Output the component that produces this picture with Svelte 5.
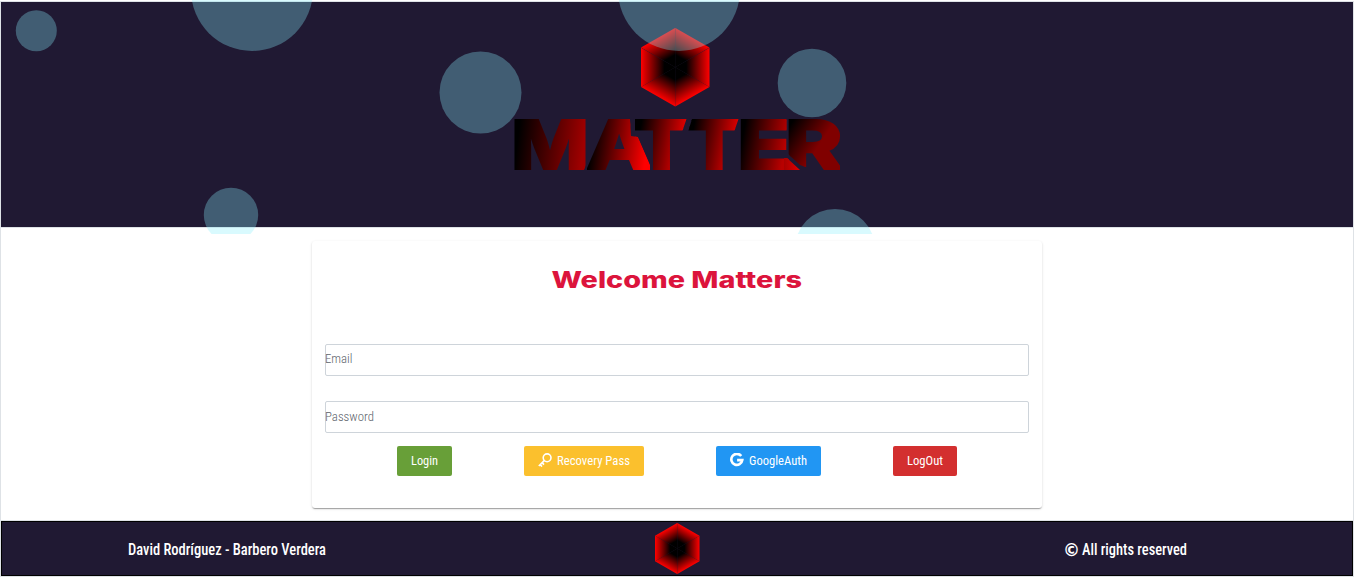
<script>
  const bubbles = [
    [36.3, 30.7, 20.5], [252, -10, 61], [480.5, 92.5, 41], [679, -10, 61],
    [812, 83, 34.3], [231, 215, 27.2], [835, 249.3, 40.3]
  ];
  const sides = [0, 1, 2, 3, 4, 5];
  // letter, left edge, width, gradient end colour, visible outline
  const letters = [
    { c: 'M', x: 0, w: 72, end: '#a00000', cut: '0,0 72,0 72,46 70,51 0,51' },
    { c: 'A', x: 75, w: 61, end: '#ff0000', cut: '73,0 116,0 117,17 124,18 136,46 136,51 73,51' },
    { c: 'T', x: 122, w: 51, end: '#e60000', cut: '121,0 172.5,0 168,13 168,51 121,51' },
    { c: 'T', x: 175, w: 50.5, end: '#e60000', cut: '178,0 224.5,0 220,13 220,51 174,51 174,13' },
    { c: 'E', x: 226, w: 49, end: '#b80000', cut: '226,0 272.5,0 272.5,38 286,51 226,51' },
    { c: 'R', x: 274, w: 51.5, end: '#800000', cut: '274,0 326,0 326,51 300,51 286,46 274,35' }
  ];
</script>

{#snippet label(text, width, size, weight, color)}
  <svg class="label" width={width} height="20" style:overflow="visible">
    <text x="0" y="15" textLength={width} lengthAdjust="spacingAndGlyphs" font-size={size} font-weight={weight} fill={color}>{text}</text>
  </svg>
{/snippet}

{#snippet gem(id, w, h)}
  <svg class="gem" width={w} height={h} viewBox="-34.2 -39.4 68.4 78.8" preserveAspectRatio="none">
    <defs>
      <linearGradient id={id} gradientUnits="userSpaceOnUse" x1="0" y1="0" x2="34.2" y2="0">
        <stop offset=".32" stop-color="#000" />
        <stop offset="1" stop-color="#f00" />
      </linearGradient>
    </defs>
    {#each sides as s}
      <path d="M0 0L34.2-19.7V19.7Z" fill="url(#{id})" transform="rotate({s * 60})" />
    {/each}
  </svg>
{/snippet}

<div class="page">
  <header>
    {@render gem('gemTop', 68.5, 78.5)}
    <svg class="word" width="327" height="52" viewBox="0 0 327 52">
      <defs>
        {#each letters as l, i}
          <linearGradient id="g{i}" gradientUnits="userSpaceOnUse" x1={l.x + 6} y1="0" x2={l.x + l.w} y2={l.c === 'R' ? 30 : 8}>
            <stop offset="0" stop-color="#000" />
            <stop offset={l.c === 'R' ? 0.65 : 1} stop-color={l.end} />
          </linearGradient>
          <clipPath id="c{i}"><polygon points={l.cut} /></clipPath>
        {/each}
        <linearGradient id="shard">
          <stop offset="0" stop-color="#a80000" />
          <stop offset="1" stop-color="#e00000" />
        </linearGradient>
      </defs>
      {#each letters as l, i}
        <g clip-path="url(#c{i})">
          <text x={l.x - 3} y="50.2" font-size="68" textLength={l.w + 6} lengthAdjust="spacingAndGlyphs" fill="url(#g{i})" stroke="url(#g{i})" stroke-width="2">{l.c}</text>
        </g>
      {/each}
      <polygon points="270,39 273,39 286,51 270,51" fill="url(#shard)" />
    </svg>
  </header>

  <main>
    <section class="card">
      <h1>
        <svg width="250" height="30">
          <text x="-0.5" y="23" font-size="22.5" textLength="250.5" lengthAdjust="spacingAndGlyphs">Welcome Matters</text>
        </svg>
      </h1>
      <div class="field">{@render label('Email', 27.5, 13, 300, '#5c636b')}</div>
      <div class="field low">{@render label('Password', 49, 13, 300, '#5c636b')}</div>
      <div class="actions">
        <button class="green">{@render label('Login', 27, 13, 400, '#fff')}</button>
        <button class="yellow">
          <svg class="icon" width="14" height="14" viewBox="0 0 14 14" fill="none" stroke="#fff">
            <circle cx="9.1" cy="4.8" r="3.9" stroke-width="1.6" />
            <path d="M6.2 7.6L.8 13M2 11.5l2 2M4 9.6l2 2" stroke-width="1.7" />
          </svg>
          {@render label('Recovery Pass', 73, 13, 400, '#fff')}
        </button>
        <button class="blue">
          <svg class="icon" width="14" height="14" viewBox="0 0 14 14" fill="none" stroke="#fff" stroke-width="2.6">
            <path d="M11.2 3A5.5 5.5 0 1 0 12.3 7.1H7.1" />
          </svg>
          {@render label('GoogleAuth', 58, 13, 400, '#fff')}
        </button>
        <button class="red">{@render label('LogOut', 36, 13, 400, '#fff')}</button>
      </div>
    </section>
  </main>

  <footer>
    <div class="author">{@render label('David Rodríguez - Barbero Verdera', 198, 16, 500, '#fff')}</div>
    {@render gem('gemBottom', 44.5, 51)}
    <div class="rights">
      <span class="copy">©</span>
      {@render label('All rights reserved', 105, 16, 500, '#fff')}
    </div>
  </footer>

  <svg class="bubbles" width="1354" height="234">
    {#each bubbles as [cx, cy, r]}
      <circle {cx} {cy} {r} />
    {/each}
  </svg>
</div>

<style>
  :global(body) { background: #fff; overflow: hidden; }
  .page {
    position: relative;
    box-sizing: border-box;
    width: 1354px;
    height: 578px;
    padding-top: 1px;
    font-family: Roboto, sans-serif;
  }
  svg { display: block; flex: none; }
  .label text { font-family: Roboto, sans-serif; font-stretch: 75%; }
  header {
    box-sizing: border-box;
    height: 227px;
    border: 1px solid #dee2e6;
    background: #201933;
    display: flex;
    flex-direction: column;
    align-items: center;
    padding-top: 26px;
  }
  header .gem { margin-right: 3px; }
  .word { margin: 12px 0 0; overflow: visible; }
  .word text { font-family: Inter, sans-serif; font-weight: 800; }
  main {
    box-sizing: border-box;
    height: 292px;
    border: solid #dee2e6;
    border-width: 0 1px;
    padding-top: 13px;
  }
  .card {
    box-sizing: border-box;
    width: 730px;
    height: 267px;
    margin: 0 auto;
    padding: 24px 13px 0;
    border-radius: 3px;
    background: #fff;
    box-shadow: 0 2px 1px -1px rgba(0,0,0,.2), 0 1px 1px 0 rgba(0,0,0,.14), 0 1px 3px 0 rgba(0,0,0,.12);
  }
  h1 { display: flex; justify-content: center; margin: 0 0 49px; }
  h1 svg { overflow: visible; }
  h1 text { font-family: Inter, sans-serif; font-weight: 800; fill: #dc143c; }
  .field {
    box-sizing: border-box;
    height: 32px;
    margin-bottom: 25px;
    border: 1px solid #ced4da;
    border-radius: 2px;
    padding-top: 3px;
  }
  .field .label { margin-left: -1px; }
  .low { padding-top: 4px; }
  .actions { display: flex; justify-content: space-evenly; margin-top: -12px; }
  button {
    display: flex;
    box-sizing: border-box;
    height: 30px;
    padding: 4px 14px 0;
    border: 0;
    border-radius: 2px;
  }
  .icon { margin: 3px 5px 0 0; }
  .green { background: #689f38; }
  .yellow { background: #fbc02d; }
  .blue { background: #2196f3; }
  .red { background: #d32f2f; }
  footer {
    box-sizing: border-box;
    height: 55px;
    margin: 1px 0 0 1px;
    width: 1352px;
    border: 1px solid #000;
    outline: 1px solid #dee2e6;
    background: #201933;
    display: grid;
    grid-template-columns: 527px 297px 1fr;
    padding-left: 126px;
    align-items: center;
  }
  .author, .rights { padding-top: 2px; }
  .rights { display: flex; align-items: center; gap: 2px; margin-left: 112px; }
  .copy { width: 17px; margin-left: -1px; font: 700 17px/20px "DejaVu Sans", sans-serif; color: #fff; }
  .bubbles { position: absolute; left: 0; top: 0; pointer-events: none; }
  .bubbles circle { fill: rgba(136,238,252,.32); }
</style>
